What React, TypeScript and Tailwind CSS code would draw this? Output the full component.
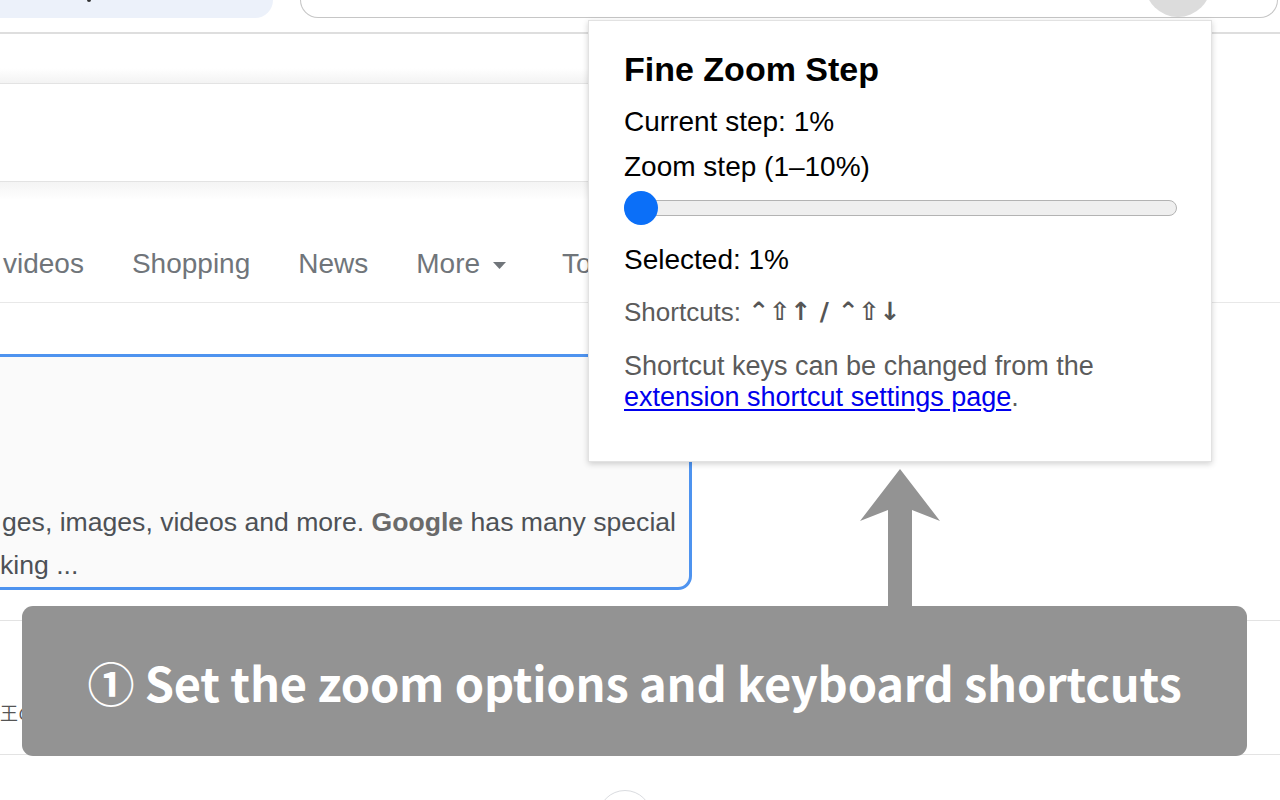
import React from "react";

const sans = { fontFamily: '"Liberation Sans", Arial, sans-serif' };

function Popup() {
  return (
    <div
      className="absolute left-[588px] top-[20px] w-[624px] h-[442px] bg-white border border-[#e2e2e2] shadow-[0_2px_6px_rgba(0,0,0,0.18)] pl-[35px] pr-[35px] pt-[28px]"
      style={sans}
    >
      <div className="text-[34px] leading-[40px] font-bold text-black">Fine Zoom Step</div>
      <div className="mt-[15px] text-[28px] leading-[36px] text-black">Current step: 1%</div>
      <div className="mt-[9px] text-[28px] leading-[36px] text-black">Zoom step (1–10%)</div>
      <div className="mt-[6px] relative h-[34px] w-[553px] flex items-center">
        <div className="w-full h-[16px] rounded-full bg-[#efefef] border border-[#b3b3b3]" />
        <div className="absolute left-0 top-0 w-[34px] h-[34px] rounded-full bg-[#0b6ff8]" />
      </div>
      <div className="mt-[17px] text-[28px] leading-[36px] text-black">Selected: 1%</div>
      <div className="mt-[17px] text-[26px] leading-[34px] text-[#5b5b5b] flex items-center">
        <span>Shortcuts:&nbsp;</span>
        <span
          className="font-bold text-[#555]"
          style={{ fontFamily: '"DejaVu Sans", sans-serif', fontSize: "25px" }}
        >
          ⌃⇧↑ / ⌃⇧↓
        </span>
      </div>
      <div className="mt-[22px] text-[27px] leading-[31px] text-[#5b5b5b]">
        Shortcut keys can be changed from the
        <br />
        <a href="#" className="text-[#0000ee] underline underline-offset-[3px]">
          extension shortcut settings page
        </a>
        .
      </div>
    </div>
  );
}

function Arrow() {
  return (
    <svg
      className="absolute left-[860px] top-[469px]"
      width="80"
      height="138"
      viewBox="0 0 80 138"
    >
      <polygon points="40,0 80,52 52,41 52,138 28,138 28,41 0,52" fill="#939393" />
    </svg>
  );
}

function Banner() {
  return (
    <div className="absolute left-[22px] top-[606px] w-[1225px] h-[150px] rounded-[11px] bg-[#939393] flex items-center justify-center">
      <span
        className="text-white font-bold text-[47px] leading-none tracking-[-0.2px]"
        style={{ fontFamily: '"Noto Sans CJK JP", "Noto Sans", sans-serif' }}
      >
        ① Set the zoom options and keyboard shortcuts
      </span>
    </div>
  );
}

export default function App() {
  return (
    <div className="relative w-[1280px] h-[800px] overflow-hidden bg-white" style={sans}>
      {/* header */}
      <div className="flex items-start h-[34px] border-b-2 border-[#dedede]">
        <div className="relative w-[273px] h-[18px] bg-[#ecf1fa] rounded-br-[40px]">
          <div className="absolute left-[87px] top-0 w-[4px] h-[2px] rounded-b-full bg-[#333]" />
        </div>
        <div className="ml-[27px] mr-[2px] flex-1 h-[18px] border-x border-b border-[#c6c6c6] rounded-b-[26px] flex justify-end pr-[66px]">
          <div className="w-[66px] h-[66px] -mt-[49px] rounded-full bg-[#dcdcdc]" />
        </div>
      </div>

      {/* strip */}
      <div className="w-[1100px] h-[50px] bg-gradient-to-b from-white from-70% to-[#f3f3f3] border-b border-[#e3e3e3]" />
      <div className="w-[1100px] h-[98px] bg-white border-b border-[#e3e3e3]" />
      <div className="w-[1100px] h-[18px] bg-gradient-to-b from-[#f4f4f4] to-white" />

      {/* tabs */}
      <div className="h-[103px] flex items-center gap-[48px] pl-[3px] pt-[26px] text-[28px] text-[#70757a] border-b border-[#e8e8e8]">
        <span>videos</span>
        <span>Shopping</span>
        <span>News</span>
        <span className="flex items-center">
          More
          <svg className="ml-[13px] mt-[2px]" width="13" height="7" viewBox="0 0 13 7">
            <polygon points="0,0 13,0 6.5,7" fill="#70757a" />
          </svg>
        </span>
        <span className="ml-[8px]">Tools</span>
      </div>

      {/* card */}
      <div className="mt-[51px] -ml-[20px] w-[712px] h-[236px] rounded-[14px] border-[3px] border-[#4e93ef] bg-[#fafafa] pl-[20px] pt-[144px] text-[26.6px] leading-[43px] text-[#4d5156]">
        <div className="-ml-[1px] whitespace-nowrap">
          ges, images, videos and more. <b className="text-[#6a6a6a]">Google</b> has many special
        </div>
        <div className="-ml-[3px] whitespace-nowrap">king ...</div>
      </div>

      {/* below */}
      <div className="mt-[30px] h-[135px] border-y border-[#e3e3e3] flex items-center">
        <span
          className="ml-0 text-[18px] text-[#555] pt-[50px]"
          style={{ fontFamily: '"Noto Sans CJK JP", sans-serif' }}
        >
          王の
        </span>
      </div>
      <div className="absolute left-[598px] top-[790px] w-[54px] h-[54px] rounded-full border border-[#dadce0] bg-white" />

      <Popup />
      <Arrow />
      <Banner />
    </div>
  );
}
